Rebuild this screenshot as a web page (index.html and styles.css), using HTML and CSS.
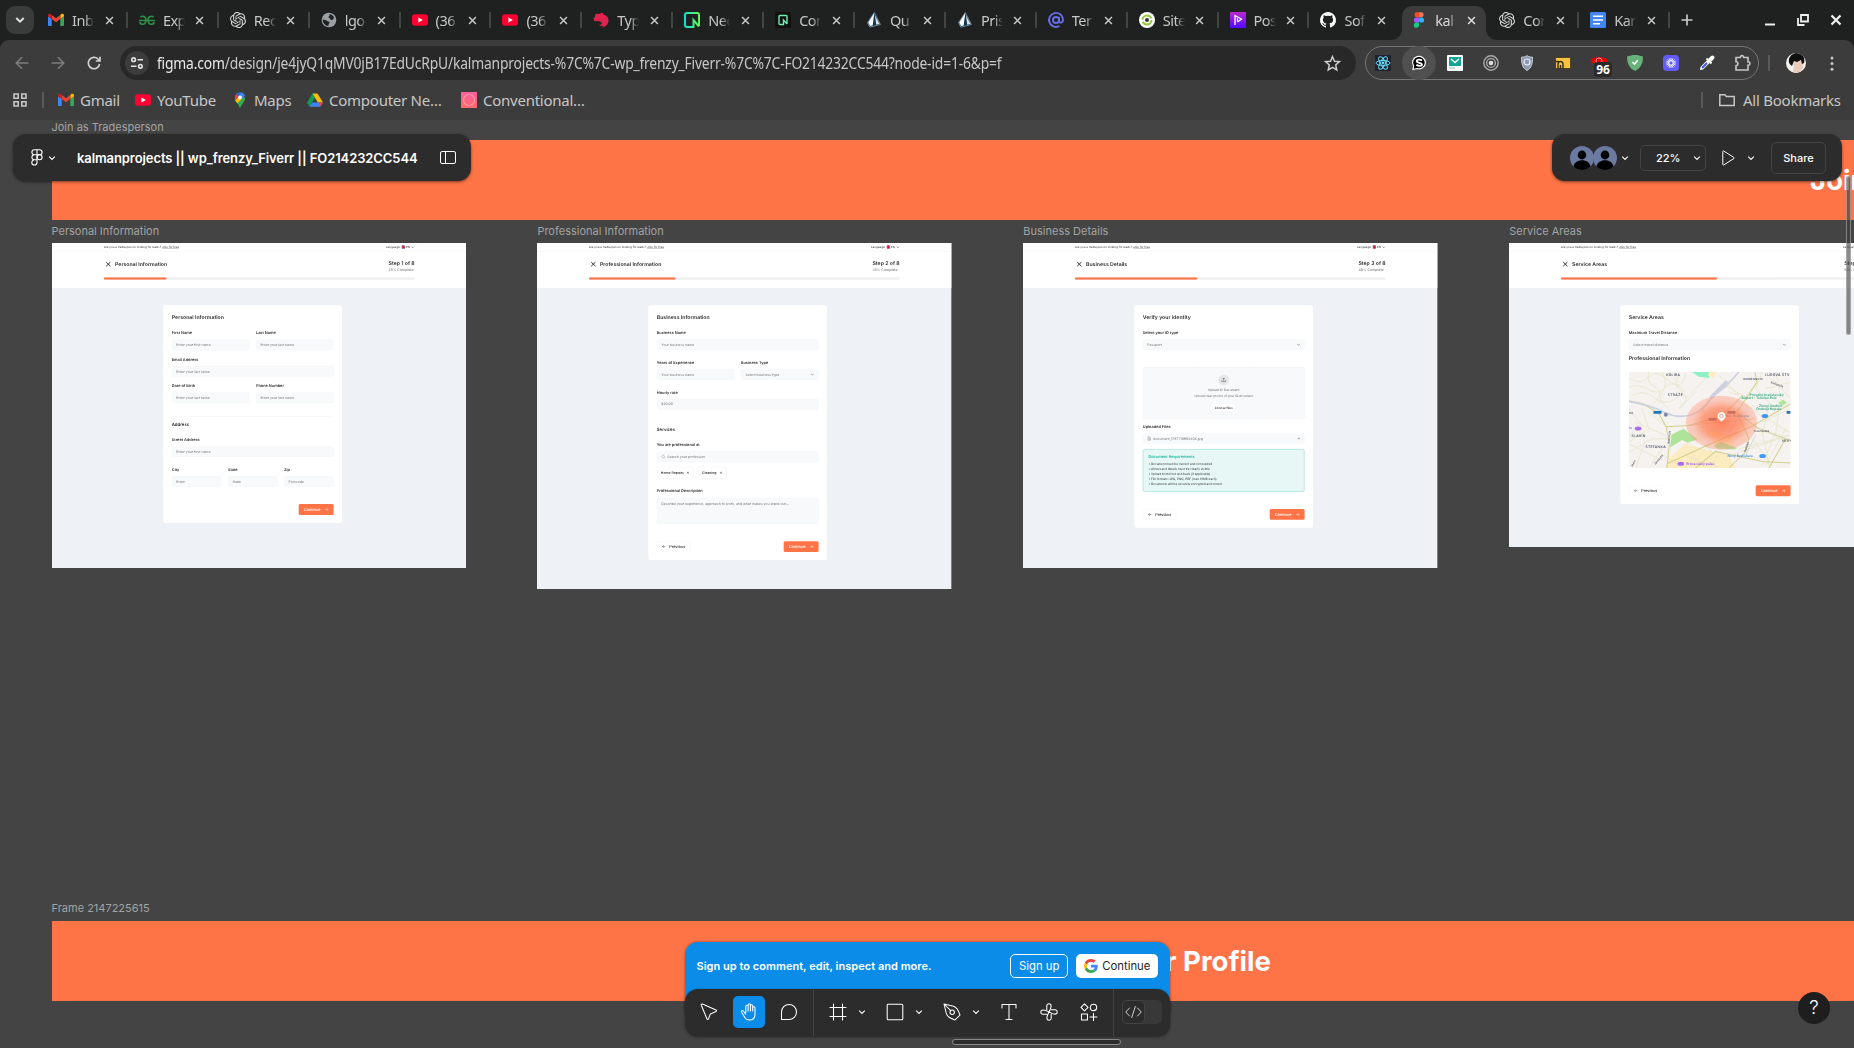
FILE: index.html
```html
<!DOCTYPE html>
<html lang="en">
<head>
<meta charset="utf-8">
<title>kalmanprojects || wp_frenzy_Fiverr || FO214232CC544</title>
<link rel="stylesheet" href="styles.css">
</head>
<body>
<svg class="defs" width="0" height="0">
  <defs>
    <symbol id="gmail" viewBox="0 0 16 16"><path fill="#4285f4" d="M1 14h2.700V7L0 4.200V13a1 1 0 0 0 1 1z"/><path fill="#34a853" d="M12.300 14H15a1 1 0 0 0 1-1V4.200L12.300 7z"/><path fill="#fbbc04" d="M12.300 3v4L16 4.200V3.400c0-1.500-1.600-2.200-2.700-1.300z"/><path fill="#ea4335" d="M3.700 7V3L8 6.200 12.300 3v4L8 10.200z"/><path fill="#c5221f" d="M0 3.400v.8L3.700 7V3l-1-.9C1.600 1.200 0 1.900 0 3.400z"/></symbol>
    <symbol id="yt" viewBox="0 0 16 16"><rect y="2.300" width="16" height="11.400" rx="3" fill="#ff0033"/><path fill="#fff" d="M6.400 5.400v5.200L10.800 8z"/></symbol>
    <symbol id="gpt" viewBox="0 0 24 24"><path fill="#d8d8d8" d="M22.2819 9.8211a5.9847 5.9847 0 0 0-.5157-4.9108 6.0462 6.0462 0 0 0-6.5098-2.9A6.0651 6.0651 0 0 0 4.9807 4.1818a5.9847 5.9847 0 0 0-3.9977 2.9 6.0462 6.0462 0 0 0 .7427 7.0966 5.98 5.98 0 0 0 .511 4.9107 6.051 6.051 0 0 0 6.5146 2.9001A5.9847 5.9847 0 0 0 13.2599 24a6.0557 6.0557 0 0 0 5.7718-4.2058 5.9894 5.9894 0 0 0 3.9977-2.9001 6.0557 6.0557 0 0 0-.7475-7.0729zm-9.022 12.6081a4.4755 4.4755 0 0 1-2.8764-1.0408l.1419-.0804 4.7783-2.7582a.7948.7948 0 0 0 .3927-.6813v-6.7369l2.02 1.1686a.071.071 0 0 1 .038.052v5.5826a4.504 4.504 0 0 1-4.4945 4.4944zm-9.6607-4.1254a4.4708 4.4708 0 0 1-.5346-3.0137l.142.0852 4.783 2.7582a.7712.7712 0 0 0 .7806 0l5.8428-3.3685v2.3324a.0804.0804 0 0 1-.0332.0615L9.74 19.9502a4.4992 4.4992 0 0 1-6.1408-1.6464zM2.3408 7.8956a4.485 4.485 0 0 1 2.3655-1.9728V11.6a.7664.7664 0 0 0 .3879.6765l5.8144 3.3543-2.0201 1.1685a.0757.0757 0 0 1-.071 0l-4.8303-2.7865A4.504 4.504 0 0 1 2.3408 7.872zm16.5963 3.8558L13.1038 8.364 15.1192 7.2a.0757.0757 0 0 1 .071 0l4.8303 2.7913a4.4944 4.4944 0 0 1-.6765 8.1042v-5.6772a.79.79 0 0 0-.407-.667zm2.0107-3.0231l-.142-.0852-4.7735-2.7818a.7759.7759 0 0 0-.7854 0L9.409 9.2297V6.8974a.0662.0662 0 0 1 .0284-.0615l4.8303-2.7866a4.4992 4.4992 0 0 1 6.6802 4.66zM8.3065 12.863l-2.02-1.1638a.0804.0804 0 0 1-.038-.0567V6.0742a4.4992 4.4992 0 0 1 7.3757-3.4537l-.142.0805L8.704 5.459a.7948.7948 0 0 0-.3927.6813zm1.0976-2.3654l2.602-1.4998 2.6069 1.4998v2.9994l-2.5974 1.4997-2.6067-1.4997Z"/></symbol>
    <symbol id="prisma" viewBox="0 0 16 16"><path fill="#0c344b" stroke="#7f9cb3" stroke-width=".8" d="M8.300.6 1.500 10.600l2.300 4.600L14.500 12.500z"/><path fill="#fff" d="M8.300 1 2.200 10.500l1.900 3.600 2.600-.6z"/><path fill="#fff" d="m8.900 3.200 4.600 8.700-3.300.9z" opacity=".85"/></symbol>
    <symbol id="x" viewBox="0 0 10 10"><path fill="none" stroke="currentColor" stroke-width="1.700" d="m1.200 1.200 7.600 7.600m0-7.600L1.200 8.800"/></symbol>
    <symbol id="chev" viewBox="0 0 8 8"><path fill="none" stroke="currentColor" stroke-width="1.100" d="m1.200 2.700 2.800 2.800 2.800-2.800"/></symbol>
    <symbol id="arrow" viewBox="0 0 16 16"><path fill="none" stroke="currentColor" stroke-width="1.800" d="M1 8h13M8.500 2.500 14 8l-5.500 5.500"/></symbol>
    <symbol id="person" viewBox="0 0 24 24"><circle cx="12" cy="12" r="12" fill="#6b7aa1"/><ellipse cx="12" cy="9" rx="4.300" ry="4.400"/><path d="M3.500 20.400C4.300 16.400 7.800 14.300 12 14.300s7.700 2.100 8.500 6.100A12 12 0 0 1 12 24a12 12 0 0 1-8.500-3.600z"/></symbol>
    <symbol id="flag" viewBox="0 0 16 16"><rect width="16" height="16" rx="4" fill="#2a3b84"/><path stroke="#fff" stroke-width="5" d="M8 0v16M0 8h16"/><path stroke="#d8143a" stroke-width="6" d="M8 0v16M0 8h16"/></symbol>
  </defs>
</svg>

<header class="browser">
  <div class="tabstrip">
    <button class="tab-search"><svg width="10" height="10" viewBox="0 0 10 10"><path fill="none" stroke="#e3e3e3" stroke-width="1.900" d="m1.300 3 3.700 3.700L8.700 3"/></svg></button>
    <div class="tabs">
      <div class="tab"><svg class="fav"><use href="#gmail"/></svg><span>Inb</span><svg class="close"><use href="#x"/></svg></div>
      <div class="tab"><svg class="fav" viewBox="0 0 16 16"><path fill="none" stroke="#2f8d46" stroke-width="1.600" d="M1.500 5.300C2.800 3.500 7 4 7 8v1M0 8.500h16M6.800 8.500c0 5-5.300 4.600-6 1.500M14.500 5.300C13.200 3.500 9 4 9 8v1M9.200 8.500c0 5 5.300 4.600 6 1.500"/></svg><span>Exp</span><svg class="close"><use href="#x"/></svg></div>
      <div class="tab"><svg class="fav"><use href="#gpt"/></svg><span>Rec</span><svg class="close"><use href="#x"/></svg></div>
      <div class="tab"><svg class="fav" viewBox="0 0 16 16"><circle cx="8" cy="8" r="7.300" fill="#9aa0a6"/><path fill="#202124" d="M8.500 2.300c1.500-.4 4.500 1.400 4.700 3.900-1.200.2-1 1.800-2.500 1.800C8.500 8 10 6 8 5.700c-1-.2-.8-1.500.5-1.500zM1.800 7.500c2 .2 3.200.5 4 1.200.8 1 2.700.3 2.700 1.700 0 1-1 1-1 2.500v1C4.500 14 1.500 11 1.800 7.500z"/></svg><span>lgo</span><svg class="close"><use href="#x"/></svg></div>
      <div class="tab"><svg class="fav"><use href="#yt"/></svg><span>(36</span><svg class="close"><use href="#x"/></svg></div>
      <div class="tab"><svg class="fav"><use href="#yt"/></svg><span>(36</span><svg class="close"><use href="#x"/></svg></div>
      <div class="tab"><svg class="fav" viewBox="0 0 16 16"><path fill="#e0234e" d="M9.300.8c.8.400.9 1.200.6 2 2.600-.2 5.600 2 5.600 5.500 0 4-3 6.900-6.400 7.100 1-.7 1.400-1.300 1.300-2-1.300 1.200-3.500.8-4.300-.6 1.500.2 2.800-.6 2.600-1.800-.3-1.700-3-1.300-4.500-2.200L3 9.500 1.300 9C1.200 8.500.3 7 .6 5.300L2 6c-.4-1.500 0-3 1-4 1.200-.6 2.200-.4 3 .1 1.200-.8 2.300-.8 3.300-1.300z"/></svg><span>Typ</span><svg class="close"><use href="#x"/></svg></div>
      <div class="tab"><svg class="fav" viewBox="0 0 16 16"><defs><linearGradient id="neon" x1="0" x2="1"><stop stop-color="#12ded0"/><stop offset="1" stop-color="#63f655"/></linearGradient></defs><path fill="none" stroke="url(#neon)" stroke-width="2" d="M15 14V3a2 2 0 0 0-2-2H3a2 2 0 0 0-2 2v10a2 2 0 0 0 2 2h6.500V8L15 14.500"/></svg><span>Neo</span><svg class="close"><use href="#x"/></svg></div>
      <div class="tab"><svg class="fav" viewBox="0 0 16 16"><rect width="16" height="16" rx="1" fill="#111"/><path fill="none" stroke="#6ff0b0" stroke-width="1.400" d="M12 12V4.500a1 1 0 0 0-1-1H5a1 1 0 0 0-1 1v7a1 1 0 0 0 1 1h3.500V8L12 12"/></svg><span>Con</span><svg class="close"><use href="#x"/></svg></div>
      <div class="tab"><svg class="fav"><use href="#prisma"/></svg><span>Qu</span><svg class="close"><use href="#x"/></svg></div>
      <div class="tab"><svg class="fav"><use href="#prisma"/></svg><span>Pris</span><svg class="close"><use href="#x"/></svg></div>
      <div class="tab"><svg class="fav" viewBox="0 0 16 16"><g fill="none" stroke="#656ee8" stroke-width="1.900"><circle cx="8" cy="8" r="3"/><path d="M11 5v4c0 2.400 4 2.400 4-1.500A7 7 0 1 0 11.500 14"/></g></svg><span>Ter</span><svg class="close"><use href="#x"/></svg></div>
      <div class="tab"><svg class="fav" viewBox="0 0 16 16"><circle cx="8" cy="8" r="8" fill="#fff"/><circle cx="8" cy="8" r="4.500" fill="none" stroke="#96c93d" stroke-width="2.200" stroke-dasharray="12 2"/><circle cx="8" cy="8" r="2" fill="#333"/></svg><span>Site</span><svg class="close"><use href="#x"/></svg></div>
      <div class="tab"><svg class="fav" viewBox="0 0 16 16"><defs><linearGradient id="pos" x2="0" y2="1"><stop stop-color="#c026d3"/><stop offset="1" stop-color="#4f0bff"/></linearGradient></defs><rect width="16" height="16" rx="1" fill="url(#pos)"/><path fill="none" stroke="#fff" stroke-width="1.300" d="M5 13V3.500L11.500 7 7.500 10M7.500 6v4"/></svg><span>Pos</span><svg class="close"><use href="#x"/></svg></div>
      <div class="tab before-active"><svg class="fav" viewBox="0 0 16 16"><path fill="#fff" d="M8 0a8 8 0 0 0-2.500 15.600c.4.100.5-.2.500-.4v-1.500c-2.200.5-2.700-.9-2.700-.9-.4-.9-.9-1.200-.9-1.200-.7-.5.100-.5.100-.5.800.1 1.200.8 1.200.8.700 1.200 1.900.9 2.300.7.100-.5.300-.9.500-1.100-1.800-.2-3.600-.9-3.600-4 0-.9.300-1.600.8-2.100-.1-.2-.4-1 .1-2.100 0 0 .7-.2 2.200.8a7.500 7.500 0 0 1 4 0c1.500-1 2.200-.8 2.200-.8.400 1.100.2 1.900.1 2.100.5.500.8 1.200.8 2.100 0 3.100-1.900 3.700-3.700 3.900.3.300.6.800.6 1.500v2.300c0 .2.100.5.500.4A8 8 0 0 0 8 0z"/></svg><span>Sof</span><svg class="close"><use href="#x"/></svg></div>
      <div class="tab active"><svg class="fav" viewBox="0 0 16 16"><path fill="#f24e1e" d="M8 .3H5.500a2.600 2.600 0 0 0 0 5.100H8z"/><path fill="#ff7262" d="M8 .3h2.500a2.600 2.600 0 0 1 0 5.100H8z"/><path fill="#a259ff" d="M8 5.400H5.500a2.600 2.600 0 0 0 0 5.200H8z"/><circle cx="10.500" cy="8" r="2.600" fill="#1abcfe"/><path fill="#0acf83" d="M5.500 10.600H8v2.500a2.600 2.600 0 1 1-2.500-2.500z"/></svg><span>kal</span><svg class="close"><use href="#x"/></svg></div>
      <div class="tab"><svg class="fav"><use href="#gpt"/></svg><span>Cor</span><svg class="close"><use href="#x"/></svg></div>
      <div class="tab"><svg class="fav" viewBox="0 0 16 16"><rect width="16" height="16" rx="1.500" fill="#4285f4"/><path stroke="#fff" stroke-width="1.600" d="M3 4.200h10M3 8h10M3 11.800h7"/></svg><span>Kar</span><svg class="close"><use href="#x"/></svg></div>
    </div>
    <svg class="newtab" width="12" height="12" viewBox="0 0 12 12"><path stroke="#c7c7c7" stroke-width="1.700" d="M6 .5v11M.5 6h11"/></svg>
    <div class="win-buttons">
      <svg width="12" height="12" viewBox="0 0 12 12"><path stroke="#eee" stroke-width="2" d="M1 10.500h10"/></svg>
      <svg width="12" height="12" viewBox="0 0 12 12"><path fill="none" stroke="#eee" stroke-width="1.800" d="M4 1h7v6.500H4zM1 4v7h6.500"/></svg>
      <svg width="12" height="12" viewBox="0 0 12 12"><path stroke="#eee" stroke-width="2.300" d="m1.500 1.500 9 9m0-9-9 9"/></svg>
    </div>
  </div>

  <div class="toolbar">
    <div class="nav">
      <svg viewBox="0 0 14 14"><path fill="none" stroke="#7d7d7d" stroke-width="1.600" d="M13.500 7H1.500M7 1.300 1.300 7 7 12.700"/></svg>
      <svg viewBox="0 0 14 14"><path fill="none" stroke="#7d7d7d" stroke-width="1.600" d="M.5 7h12M7 1.300 12.700 7 7 12.700"/></svg>
      <svg viewBox="0 0 14 14"><path fill="none" stroke="#d0d0d0" stroke-width="1.700" d="M12.600 8A5.700 5.700 0 1 1 11 3l1.500 1.500M13 .8V5H8.800"/></svg>
    </div>
    <div class="omnibox">
      <span class="site"><svg width="14" height="14" viewBox="0 0 14 14"><g fill="none" stroke="#e3e3e3" stroke-width="1.600"><circle cx="3.600" cy="3.700" r="1.800"/><path d="M7.500 3.700H13M1 10.300h5.500"/><circle cx="10.400" cy="10.300" r="1.800"/></g></svg></span>
      <span class="url"><b>figma.com</b>/design/je4jyQ1qMV0jB17EdUcRpU/kalmanprojects-%7C%7C-wp_frenzy_Fiverr-%7C%7C-FO214232CC544?node-id=1-6&amp;p=f</span>
      <svg class="star" viewBox="0 0 16 16"><path fill="none" stroke="#d0d0d0" stroke-width="1.400" d="m8 1.600 1.900 4.300 4.600.4L11 9.400l1 4.600-4-2.400L4 14l1-4.600-3.500-3.100 4.600-.4z"/></svg>
    </div>
    <div class="extensions">
      <span><svg viewBox="0 0 16 16"><rect width="16" height="16" fill="#20232a"/><g fill="none" stroke="#61dafb"><ellipse cx="8" cy="8" rx="7" ry="2.600"/><ellipse cx="8" cy="8" rx="7" ry="2.600" transform="rotate(60 8 8)"/><ellipse cx="8" cy="8" rx="7" ry="2.600" transform="rotate(120 8 8)"/></g><circle cx="8" cy="8" r="1.400" fill="#61dafb"/></svg></span>
      <span class="hover"><svg viewBox="0 0 16 16"><path fill="#000" stroke="#fff" stroke-width="1.200" d="M2 14.500 2.600 11A6.400 6.200 0 1 1 6 13.500z"/><path fill="none" stroke="#fff" stroke-width="1.800" d="M11 5.600C9.500 4.300 5.700 4.300 5.700 6.200S11 7.600 11 9.400s-4 1.800-5.600.4"/></svg></span>
      <span><svg viewBox="0 0 16 16"><rect width="16" height="16" rx="1" fill="#fff"/><path fill="#12a594" d="M2 2h12v9H2z"/><path fill="none" stroke="#fff" stroke-width="1.400" d="m4 4 4 3.500L12 4"/><path stroke="#9bb" d="M2 13h6"/></svg></span>
      <span><svg viewBox="0 0 16 16"><g fill="none" stroke="#aaa" stroke-width="1.400"><circle cx="8" cy="8" r="7.200"/><circle cx="8" cy="8" r="4.400"/></g><circle cx="8" cy="8" r="2.300" fill="#ddd"/></svg></span>
      <span><svg viewBox="0 0 16 16"><path fill="#8d99ae" stroke="#c9d1dd" d="M8 .7c2 1.300 4 1.500 5.500 1.500C13.500 9 12.500 13 8 15.400 3.500 13 2.500 9 2.500 2.200 4 2.200 6 2 8 .7z"/><circle cx="8" cy="7" r="3" fill="none" stroke="#eef" stroke-width="1.200"/></svg></span>
      <span><svg viewBox="0 0 16 16"><path fill="#f6c343" stroke="#3b3217" stroke-width=".8" d="M.5 2.500h15v11H.5z"/><path fill="none" stroke="#3b3217" stroke-width="1.500" d="M1 6.500h2.500M3 13.500v-4c0-2 1.200-3 2.500-3S8 7.500 8 9.500v4M5.500 10v3.500"/></svg></span>
      <span class="badged"><svg viewBox="0 0 16 16"><path fill="#e60000" d="M0 4.500C2 1 14 1 16 4.500V8H0z"/><circle cx="8" cy="6" r="3" fill="none" stroke="#ff9a9a"/></svg><i>96</i></span>
      <span><svg viewBox="0 0 16 16"><path fill="#67b279" d="M8 0c2.600 0 5.400.6 8 1.500C16 8 14 13 8 16 2 13 0 8 0 1.500 2.600.6 5.400 0 8 0z"/><path fill="none" stroke="#fff" stroke-width="1.500" d="m5.300 7 2.200 2.200 3.200-4"/></svg></span>
      <span><svg viewBox="0 0 16 16"><rect width="16" height="16" rx="4" fill="#635bff"/><g stroke="#fff" stroke-width=".9"><path d="M8 3v10M3 8h10M4.500 4.500l7 7M11.500 4.500l-7 7M6.100 3.400l3.800 9.200M9.900 3.400l-3.800 9.200M3.400 6.100l9.200 3.800M3.400 9.900l9.200-3.800"/></g><circle cx="8" cy="8" r="2.200" fill="#635bff" stroke="#fff"/></svg></span>
      <span><svg viewBox="0 0 16 16"><path fill="#fff" d="m1 15 .5-3L8 5.300 10.700 8 4 14.500z"/><path stroke="#3b5bdb" stroke-width="2" d="m3 13 5-5"/><path stroke="#fff" stroke-width="1.800" d="m7.500 3.500 5 5"/><path stroke="#fff" stroke-width="4" stroke-linecap="round" d="m10.500 5.500 3-3"/></svg></span>
      <span><svg viewBox="0 0 16 16"><path fill="none" stroke="#c7c7c7" stroke-width="1.600" d="M1 2.500h4.300c-.2-2.500 3.600-2.500 3.400 0H13v4.300c2.500-.2 2.500 3.600 0 3.400V15H1v-4.300c2.500 0 2.500-3.900 0-3.900z"/></svg></span>
    </div>
    <i class="vline"></i>
    <svg class="avatar" viewBox="0 0 20 20"><clipPath id="av"><circle cx="10" cy="10" r="10"/></clipPath><g clip-path="url(#av)"><path fill="#f3f0ee" d="M0 0h20v20H0z"/><path fill="#e8cbbb" d="M8 8h9v7l-4 5H7z"/><path fill="#101010" d="M3 9C2 3 8-1 13 0c5 1 6 6 5 10l-2 1-1-4-4 2-3-1-2 5C5 12 3 11 3 9z"/></g></svg>
    <svg class="kebab" viewBox="0 0 4 16"><g fill="#c7c7c7"><circle cx="2" cy="2" r="1.600"/><circle cx="2" cy="8" r="1.600"/><circle cx="2" cy="14" r="1.600"/></g></svg>
  </div>

  <div class="bookmarks">
    <svg class="apps" viewBox="0 0 14 14"><path fill="none" stroke="#c7c7c7" stroke-width="1.600" d="M1 1h4.200v4.200H1zM8.800 1H13v4.200H8.800zM1 8.800h4.200V13H1zM8.800 8.800H13V13H8.800z"/></svg>
    <i class="vline"></i>
    <a class="b-gmail"><svg viewBox="0 0 16 16"><use href="#gmail"/></svg><span>Gmail</span></a>
    <a class="b-yt"><svg viewBox="0 0 16 16"><use href="#yt"/></svg><span>YouTube</span></a>
    <a class="b-maps"><svg viewBox="0 0 16 16"><path fill="#34a853" d="M3.500 9C5.500 11.500 7 13 7.400 15.300c.2.900 1 .9 1.200 0C9 13 13.500 9.500 13.200 5.300L8 6z"/><path fill="#fbbc04" d="M3 8.200 6.500 4l3.300 3.100L5.300 11.300z"/><path fill="#4285f4" d="M8 .2c2 0 4 1.200 4.800 3.200L9.800 7.100 6.500 4l2.800-3.600z"/><path fill="#4285f4" d="M6.300 4.200 9.300.4 12.800 3.400 9.800 7z"/><path fill="#ea4335" d="M4.200 2 7 4.300 3.300 8.600C2.400 6.800 2.500 4 4.200 2z"/><path fill="#1a73e8" d="M4.200 2C5.300.7 7.400-.1 9.400.4L6.500 4z"/><circle cx="8" cy="5.400" r="1.900" fill="#fff"/></svg><span>Maps</span></a>
    <a class="b-drive"><svg viewBox="0 0 16 16"><path fill="#0f9d58" d="M5.500 1.500 0 10.800l2.700 4L8 5.500z"/><path fill="#fbbc04" d="M5.500 1.500h5L16 10.500h-5.200z"/><path fill="#4285f4" d="M5.300 10.500H16l-2.700 4.300H2.700z"/><path fill="#ea4335" d="m12 10.500 4 0-2.300 3.700z"/></svg><span>Compouter Ne…</span></a>
    <a class="b-conv"><svg viewBox="0 0 16 16"><defs><linearGradient id="cc" x2="0" y2="1"><stop stop-color="#fb5fa0"/><stop offset="1" stop-color="#fd6a6a"/></linearGradient></defs><path fill="url(#cc)" d="M0 0h16v16H0z"/><circle cx="8" cy="8" r="5.500" fill="none" stroke="#ff9aa8" stroke-width="1.200"/></svg><span>Conventional…</span></a>
    <i class="vline last"></i>
    <a class="b-all"><svg viewBox="0 0 16 16"><path fill="none" stroke="#c7c7c7" stroke-width="1.500" d="M.8 2.700h5l1.600 1.700h7.800v9H.8z"/></svg><span>All Bookmarks</span></a>
  </div>
</header>

<main class="canvas">
  <div class="label l-join">Join as Tradesperson</div>
  <div class="banner banner-1"><span>Join as Tradesperson</span></div>
  <div class="label l-frame">Frame 2147225615</div>
  <div class="banner banner-2"><span>Your Profile</span></div>

  <section class="board board-1">
    <div class="label">Personal Information</div>
    <div class="clip"><div class="page">
      <div class="topbar"><span>Are you a tradesperson looking for leads? <u>Join for free</u></span><span class="lang">Language: <svg width="16" height="16"><use href="#flag"/></svg>EN <svg width="16" height="16"><use href="#chev"/></svg></span></div>
      <div class="head"><div class="head-row"><svg class="hx"><use href="#x"/></svg><h2>Personal Information</h2><div class="step"><b>Step 1 of 8</b><small>25% Complete</small></div></div><div class="bar"><i style="width:290px"></i></div></div>
      <div class="card">
        <h3>Personal Information</h3>
        <div class="row first"><div class="field"><label>First Name</label><p>Enter your first name</p></div><div class="field"><label>Last Name</label><p>Enter your last name</p></div></div>
        <div class="row tight"><div class="field"><label>Email Address</label><p>Enter your last name</p></div></div>
        <div class="row tight"><div class="field"><label>Date of Birth</label><p>Enter your last name</p></div><div class="field"><label>Phone Number</label><p>Enter your last name</p></div></div>
        <hr>
        <h4 class="after-rule">Address</h4>
        <div class="row"><div class="field"><label>Street Address</label><p>Enter your first name</p></div></div>
        <div class="row"><div class="field"><label>City</label><p>Enter</p></div><div class="field"><label>State</label><p>State</p></div><div class="field"><label>Zip</label><p>Postcode</p></div></div>
        <div class="actions"><span></span><span class="btn primary">Continue <svg><use href="#arrow"/></svg></span></div>
      </div>
    </div></div>
  </section>

  <section class="board board-2">
    <div class="label">Professional Information</div>
    <div class="clip"><div class="page">
      <div class="topbar"><span>Are you a tradesperson looking for leads? <u>Join for free</u></span><span class="lang">Language: <svg width="16" height="16"><use href="#flag"/></svg>EN <svg width="16" height="16"><use href="#chev"/></svg></span></div>
      <div class="head"><div class="head-row"><svg class="hx"><use href="#x"/></svg><h2>Professional Information</h2><div class="step"><b>Step 2 of 8</b><small>35% Complete</small></div></div><div class="bar"><i style="width:402px"></i></div></div>
      <div class="card">
        <h3>Business Information</h3>
        <div class="row"><div class="field"><label>Business Name</label><p>Your business name</p></div></div>
        <div class="row"><div class="field"><label>Years of Experience</label><p>Your business name</p></div><div class="field"><label>Business Type</label><p>Select business type <svg class="end"><use href="#chev"/></svg></p></div></div>
        <div class="row"><div class="field"><label>Hourly rate</label><p>$20.00</p></div></div>
        <h4 class="spaced">Services</h4>
        <div class="row"><div class="field"><label>You are professional at</label><p class="search"><svg class="lead" viewBox="0 0 16 16"><path fill="none" stroke="#777" stroke-width="1.500" d="M11 11a5.500 5.500 0 1 1 1-1l3 4"/></svg>Search your profession</p></div></div>
        <div class="chips"><span class="w1">Home Repairs <svg><use href="#x"/></svg></span><span class="w2">Cleaning <svg><use href="#x"/></svg></span></div>
        <div class="row"><div class="field"><label>Professional Description</label><p class="area">Describe your experience, approach to work, and what makes you stand out...</p></div></div>
        <div class="actions"><span class="btn"><svg class="flip"><use href="#arrow"/></svg> Previous</span><span class="btn primary">Continue <svg><use href="#arrow"/></svg></span></div>
      </div>
    </div></div>
  </section>

  <section class="board board-3">
    <div class="label">Business Details</div>
    <div class="clip"><div class="page">
      <div class="topbar"><span>Are you a tradesperson looking for leads? <u>Join for free</u></span><span class="lang">Language: <svg width="16" height="16"><use href="#flag"/></svg>EN <svg width="16" height="16"><use href="#chev"/></svg></span></div>
      <div class="head"><div class="head-row"><svg class="hx"><use href="#x"/></svg><h2>Business Details</h2><div class="step"><b>Step 3 of 8</b><small>40% Complete</small></div></div><div class="bar"><i style="width:568px"></i></div></div>
      <div class="card">
        <h3>Verify your identity</h3>
        <div class="row"><div class="field"><label>Select your ID type</label><p>Passport <svg class="end"><use href="#chev"/></svg></p></div></div>
        <div class="drop"><span class="disc"><svg width="24" height="24" viewBox="0 0 24 24"><path fill="none" stroke="#333" stroke-width="2" d="M3 14v6h18v-6M12 16V4M7 8.500l5-5 5 5"/></svg></span><span class="d1">Upload ID Document</span><span class="d2">Upload clear photos of your ID document</span><span class="choose">Choose files</span></div>
        <div class="row files"><div class="field"><label>Uploaded Files</label><p><svg class="lead" viewBox="0 0 16 16"><path fill="none" stroke="#666" stroke-width="1.500" d="M3 1h7l3 3v11H3zM5.500 7h5M5.500 10h5"/></svg>document_1757719693304.jpg <svg class="end x"><use href="#x"/></svg></p></div></div>
        <div class="reqs"><b>Document Requirements</b><ul><li>Document must be current and not expired</li><li>All text and details must be clearly visible</li><li>Upload both front and back (if applicable)</li><li>File formats: JPG, PNG, PDF (max 10MB each)</li><li>Documents will be securely encrypted and stored</li></ul></div>
        <div class="actions"><span class="btn"><svg class="flip"><use href="#arrow"/></svg> Previous</span><span class="btn primary">Continue <svg><use href="#arrow"/></svg></span></div>
      </div>
    </div></div>
  </section>

  <section class="board board-4">
    <div class="label">Service Areas</div>
    <div class="clip"><div class="page">
      <div class="topbar"><span>Are you a tradesperson looking for leads? <u>Join for free</u></span><span class="lang">Language: <svg width="16" height="16"><use href="#flag"/></svg>EN <svg width="16" height="16"><use href="#chev"/></svg></span></div>
      <div class="head"><div class="head-row"><svg class="hx"><use href="#x"/></svg><h2>Service Areas</h2><div class="step"><b>Step 4 of 8</b><small>50% Complete</small></div></div><div class="bar"><i style="width:724px"></i></div></div>
      <div class="card">
        <h3>Service Areas</h3>
        <div class="row"><div class="field"><label>Maximum Travel Distance</label><p>Select travel distance <svg class="end"><use href="#chev"/></svg></p></div></div>
        <h3 class="second">Professional Information</h3>
        <svg class="map" viewBox="0 0 485 288" preserveAspectRatio="none">
          <defs><radialGradient id="heat"><stop stop-color="#ff6a3c" stop-opacity=".8"/><stop offset=".55" stop-color="#ff7a50" stop-opacity=".68"/><stop offset=".82" stop-color="#ff8d6c" stop-opacity=".42"/><stop offset="1" stop-color="#ff9577" stop-opacity=".38"/></radialGradient></defs>
          <path fill="#f5f2ef" d="M0 0h485v288H0z"/>
          <path fill="#8ff0c4" d="M190 0h58l-8 18-30-4z"/><path fill="#fdecc0" d="M240 0h22l-6 16-18-4zM120 260l50-45 70 20 60 15 20 38H110zM240 170l60 20 20 30-60 5z"/>
          <path fill="#aee39a" d="M128 188l36-18 42 32-30 10-16-8-36 22zM255 222l20-14 50 20-8 4-50-2zM448 92l14-10 12 10-16 10z"/>
          <g fill="none" stroke="#e2e2c0" stroke-width="1.800">
            <path d="M0 20q40 20 60-5t60 10 50-20M0 45q30-10 60 8t50-8 60 15M10 70q40-20 70 10t80-15M60 0q-10 30 20 45t-10 55M100 0q20 40 0 60t20 50M150 10q-20 30 10 50t-10 50M0 110l40 50-40 30M40 110l20 60-60 40M20 150l90 40M60 120l60 50M0 240l70-40 60 0M20 288l30-80M60 288l40-60M0 215l100 50M90 240l60 40"/>
            <path d="M200 60l-50 50M230 20l-60 60M270 10l60 60M290 40l50 30M300 60l80 20M400 0l-20 50 60 60M430 20l55 60M410 50l75-20M440 0l20 100M330 90l60 30M380 120l100 60M400 150l85-40M420 100l-20 90M450 110l-10 80M340 150l140 60M370 200l60 80M400 180l20 100M440 180l-40 100M470 170l-60 110M330 230l150-40M300 250l180-60M200 240l-30 48M240 220l-60 68M280 230l-40 58M210 200l60 60M170 250l100 38M300 150l-40 60M220 100l20 90"/>
          </g>
          <g fill="none" stroke="#d2d08d" stroke-width="3"><path d="M0 86l40 8 50 30 22 40 70-4 100-30 60-60M112 164l10 50-8 74M378 0l6 30-60 90 36 80-10 40-50 48M323 120l60 46 102 40M485 95l-120 70-120 50-130 60M200 288l60-50 140 30 85 5M470 200l-50 88"/></g>
          <g fill="none" stroke="#cdd0de"><path stroke-width="5" d="M0 88q60 10 110 34t100-4q20-14 40-44l40-30 40-44"/><path stroke-width="11" d="M245 78l50-50"/></g>
          <g fill="none" stroke="#a5a7a9"><path d="M180 160l200-20M300 180l40-60M380 190l-30 60"/></g>
          <g fill="#4e5f86"><path d="M296 117h24v8h-24zM239 138h24v8h-24z"/></g>
          <g class="blue"><text x="290" y="136">Hot. Bratislava</text><text x="296" y="255">Nový Bratislava</text></g>
          <ellipse cx="278" cy="152" rx="107" ry="81" fill="url(#heat)"/>
          <g class="places"><text x="112" y="12">KOLIBA</text><text x="117" y="73">STRÁŽE</text><text x="408" y="11">ĽUDOVÁ ŠTV</text><text x="343" y="25" class="sm">HORNÉ MESTO</text><text x="8" y="196">SLAVÍN</text><text x="50" y="229">ŠTEFANKA</text><text x="460" y="209">NIVY</text><text x="0" y="125" class="sm">TIA</text><text transform="translate(12 284) rotate(-65)" class="sm">Staro</text><text transform="translate(80 278) rotate(-50)" class="sm">Zámocká</text><text transform="translate(122 214) rotate(-85)" class="sm">Rázusova</text><text transform="translate(350 240) rotate(-70)" class="sm">Košická</text><text x="374" y="180" class="sm">Trenčianska</text><text transform="translate(425 33) rotate(20)" class="sm">Račianska</text></g>
          <g class="green"><text x="362" y="72">Prírodný bratislavský</text><text x="338" y="80">Airport - Tehelné Pole</text><text x="390" y="105">Zimný štadión</text><text x="382" y="115">Ondreja Nepelu</text></g>
          <text x="172" y="279" class="violet">Primaciálny palác</text><text x="0" y="172" class="violet">in</text>
          <g fill="#2473b8"><path d="M74 117h24v8H74zM473 117h12v8h-12z"/></g><circle cx="111" cy="128" r="6" fill="#7d89a5"/>
          <g fill="#3d97f5"><ellipse cx="408" cy="132" rx="10" ry="6"/><ellipse cx="401" cy="252" rx="10" ry="6"/></g><g fill="#a96bf0"><ellipse cx="28" cy="169" rx="10" ry="6"/><ellipse cx="156" cy="275" rx="10" ry="6"/></g>
          <path fill="#fff" stroke="#f9a48c" d="M278 120c8 0 12 6 12 13 0 8-8 10-12 16-4-6-12-8-12-16 0-7 4-13 12-13z"/><circle cx="278" cy="132" r="5.500" fill="none" stroke="#f27d5d" stroke-width="2"/>
        </svg>
        <div class="actions"><span class="btn"><svg class="flip"><use href="#arrow"/></svg> Previous</span><span class="btn primary">Continue <svg><use href="#arrow"/></svg></span></div>
      </div>
    </div></div>
  </section>

  <div class="scroll-v"></div>
  <div class="scroll-h"></div>

  <div class="panel file-panel">
    <svg class="flogo" viewBox="0 0 12 17"><g fill="none" stroke="#fff" stroke-width="1.100"><path d="M6 .8H3.400a2.500 2.500 0 0 0 0 5H6zM6 .8h2.600a2.500 2.500 0 0 1 0 5H6zM6 5.800H3.400a2.500 2.500 0 0 0 0 5H6zM3.400 10.800H6v2.600a2.600 2.600 0 1 1-2.600-2.600z"/><circle cx="8.600" cy="8.300" r="2.500"/></g></svg>
    <svg class="chev c1"><use href="#chev"/></svg>
    <strong>kalmanprojects || wp_frenzy_Fiverr || FO214232CC544</strong>
    <svg class="side" viewBox="0 0 16 13"><path fill="none" stroke="#fff" d="M2 .5h12A1.500 1.500 0 0 1 15.500 2v9a1.500 1.500 0 0 1-1.500 1.500H2A1.500 1.500 0 0 1 .5 11V2A1.500 1.500 0 0 1 2 .5zM5.500.5v12"/></svg>
  </div>

  <div class="panel share-panel">
    <svg class="user"><use href="#person"/></svg><svg class="user second-user"><use href="#person"/></svg>
    <svg class="chev"><use href="#chev"/></svg>
    <span class="zoom">22% <svg class="chev"><use href="#chev"/></svg></span>
    <svg class="play" viewBox="0 0 13 16"><path fill="none" stroke="#fff" stroke-linejoin="round" d="M.8 1.500v13a.6.600 0 0 0 1 .4l10-6.300a.7.700 0 0 0 0-1.200l-10-6.300a.6.600 0 0 0-1 .4z"/></svg>
    <svg class="chev"><use href="#chev"/></svg>
    <span class="share">Share</span>
  </div>

  <div class="signup">
    <strong>Sign up to comment, edit, inspect and more.</strong>
    <span class="outline">Sign up</span>
    <span class="google"><svg viewBox="0 0 48 48"><path fill="#ea4335" d="M24 9.500c3.540 0 6.710 1.220 9.210 3.600l6.850-6.850C35.900 2.380 30.470 0 24 0 14.620 0 6.510 5.380 2.560 13.220l7.980 6.190C12.430 13.720 17.740 9.500 24 9.500z"/><path fill="#4285f4" d="M46.980 24.550c0-1.570-.15-3.090-.38-4.550H24v9.020h12.940c-.58 2.960-2.260 5.480-4.780 7.180l7.730 6c4.510-4.180 7.090-10.360 7.090-17.650z"/><path fill="#fbbc05" d="M10.530 28.590A14.500 14.500 0 0 1 10.530 19.410l-7.980-6.190a24 24 0 0 0 0 21.560z"/><path fill="#34a853" d="M24 48c6.480 0 11.930-2.130 15.890-5.810l-7.730-6c-2.150 1.450-4.920 2.300-8.160 2.300-6.260 0-11.570-4.220-13.470-9.910l-7.980 6.190C6.510 42.620 14.620 48 24 48z"/></svg>Continue</span>
  </div>

  <div class="panel tools">
    <span class="tool"><svg viewBox="0 0 18 18"><path d="M1.300 2.200 7 16c.3.700 1.100.6 1.400 0l2-5.100 5.600-2.500c.7-.4.700-1.100 0-1.400L2.500 1.100c-.8-.3-1.500.3-1.200 1.100z"/></svg></span>
    <span class="tool on"><svg viewBox="0 0 18 18"><path d="M5.800 9.500V3.300a1.150 1.150 0 0 1 2.300 0V1.900a1.150 1.150 0 0 1 2.300 0v1a1.150 1.150 0 0 1 2.300 0v2a1.150 1.150 0 0 1 2.300 0V11c0 3.500-2 6-5.300 6-2.700 0-4.400-1.300-5.500-3.500L1.600 9.200c-.7-1.500 1-2.200 1.900-1l2.300 3M8.100 3v5M10.400 2.600V8M12.700 4.500V8"/></svg></span>
    <span class="tool"><svg viewBox="0 0 18 18"><path d="M1.500 16.500V9A7.500 7.500 0 1 1 9 16.500z"/></svg></span>
    <i class="split"></i>
    <span class="tool t-frame"><svg viewBox="0 0 18 18"><path d="M4.500 1v16M13.500 1v16M1 4.500h16M1 13.500h16"/></svg></span><svg class="chev"><use href="#chev"/></svg>
    <span class="tool"><svg viewBox="0 0 18 18"><rect x="1.200" y="1.200" width="15.600" height="15.600" rx="1"/></svg></span><svg class="chev"><use href="#chev"/></svg>
    <span class="tool"><svg viewBox="0 0 18 18"><path d="M1 1l9.500 2.300c3 .8 5 4.200 6.500 8.700l-5 5C7.500 15.500 4 13.500 3.300 10.500zM1 1l6.700 6.700M12 17l5-5"/><circle cx="9.200" cy="9.200" r="2.200"/></svg></span><svg class="chev"><use href="#chev"/></svg>
    <span class="tool t-text"><svg viewBox="0 0 18 18"><path d="M2 5V1.500h14V5M9 1.500v15M6 16.500h6"/></svg></span>
    <span class="tool"><svg viewBox="0 0 18 18"><path id="blade" d="M6.800 6.900V2.800c0-2.700 4.300-2.700 4.300.2 0 2.300-1.100 3.600-2.100 6"/><use href="#blade" transform="rotate(90 9 9)"/><use href="#blade" transform="rotate(180 9 9)"/><use href="#blade" transform="rotate(270 9 9)"/></svg></span>
    <span class="tool"><svg viewBox="0 0 18 18"><path d="M4.500.9 8 4.400 4.500 7.900 1 4.400zM1.500 11h6v6h-6zM13.500 10.500v7M10 14h7"/><circle cx="13.500" cy="4.400" r="3.200"/></svg></span>
    <i class="split s2"></i>
    <span class="dev"><span><svg viewBox="0 0 18 14"><path d="M5 2.500.8 7 5 11.500M13 2.500 17.200 7 13 11.500M11 .8 7 13.200"/></svg></span></span>
  </div>

  <div class="help">?</div>
</main>
</body>
</html>
```

FILE: styles.css
```css
* { box-sizing: border-box; }
body { margin: 0; width: 1854px; height: 1048px; overflow: hidden; display: flex; flex-direction: column; background: #444; font-family: Inter, sans-serif; }
.defs { position: absolute; }
svg { display: block; flex: none; overflow: visible; }

/* browser window */
.browser { flex: none; height: 120px; background: #1f2120; color: #c7c7c7; font: 15px "Noto Sans", "Open Sans", sans-serif; }
.tabstrip { height: 40px; display: flex; align-items: center; padding-left: 6px; }
.tab-search { width: 28px; height: 28px; border: 0; border-radius: 9px; padding: 0; background: #3a3b3b; display: grid; place-items: center; }
.tabs { display: flex; margin-left: 3px; align-self: stretch; align-items: center; }
.tab { width: 90.9px; height: 34px; display: flex; align-items: center; padding-left: 11px; position: relative; }
.tab::after { content: ""; position: absolute; right: 0; top: 9px; width: 2px; height: 16px; background: #434544; }
.fav { width: 16px; height: 16px; }
.tab span { width: 22px; margin-left: 8px; overflow: hidden; white-space: nowrap; font-size: 14.500px; letter-spacing: -.5px; -webkit-mask: linear-gradient(90deg, #000 60%, transparent); mask: linear-gradient(90deg, #000 60%, transparent); }
.close { width: 9px; height: 9px; margin-left: 10.500px; }
.before-active::after, .active::after { display: none; }
.active { width: 84px; margin: 0 2px 0 2px; padding-left: 9px; height: 34px; align-self: flex-end; background: #3c3c3c; border-radius: 10px 10px 0 0; padding-bottom: 6px; color: #dcdcdc; }
.active .close { margin-left: 10px; }
.active::before { content: ""; position: absolute; left: -10px; right: -10px; bottom: 0; height: 10px; background: radial-gradient(circle at 0 0, transparent 9.5px, #3c3c3c 10px) left / 10px 10px no-repeat, radial-gradient(circle at 100% 0, transparent 9.5px, #3c3c3c 10px) right / 10px 10px no-repeat; }
.newtab { margin-left: 11px; }
.win-buttons { margin-left: auto; display: flex; gap: 21px; padding-right: 12px; }

.toolbar { height: 46px; background: #3c3c3c; border-radius: 9px 9px 0 0; display: flex; align-items: center; }
.nav { display: flex; gap: 22px; padding-left: 15px; width: 120px; flex: none; }
.nav svg { width: 14px; height: 14px; }
.omnibox { width: 1236px; flex: none; height: 34px; border-radius: 17px; background: #282828; display: flex; align-items: center; padding-left: 5px; }
.site { width: 24px; height: 24px; border-radius: 50%; background: #3c3c3c; display: grid; place-items: center; }
.url { margin-left: 8px; font-size: 15.500px; letter-spacing: -.2px; white-space: nowrap; transform: scaleX(.894); transform-origin: 0 50%; }
.url b { font-weight: 400; color: #e8e8e8; }
.star { width: 17px; height: 17px; margin: 0 15px 0 auto; }
.extensions { margin-left: 9px; width: 394px; flex: none; height: 34px; border: 1px solid #757575; border-radius: 17px; display: flex; align-items: center; }
.extensions span { width: 36.100px; flex: none; height: 32px; display: grid; place-items: center; position: relative; left: -1.500px; }
.extensions svg { width: 16px; height: 16px; }
.extensions .hover::before { content: ""; position: absolute; left: 1px; top: -1px; width: 34px; height: 34px; border-radius: 50%; background: #505050; }
.extensions .hover svg { position: relative; }
.badged i { position: absolute; left: 13px; top: 15px; width: 18px; height: 15px; border-radius: 4px; background: #2a2a2a; color: #fff; font: 700 12px/15px "Noto Sans", sans-serif; text-align: center; }
.vline { width: 2px; height: 16px; background: #5a5a5a; flex: none; }
.toolbar .vline { margin-left: 9px; }
.avatar { width: 20px; height: 20px; margin-left: 16px; }
.kebab { width: 4px; height: 15px; margin-left: 24px; }

.bookmarks { height: 34px; background: #3c3c3c; display: flex; align-items: center; padding: 0 0 6px 13px; letter-spacing: -.25px; }
.bookmarks a { display: flex; align-items: center; gap: 6px; white-space: nowrap; }
.bookmarks a svg { width: 16px; height: 16px; }
.apps { width: 14px; height: 14px; margin-right: 15px; }
.b-gmail { margin-left: 14px; width: 77px; }
.b-yt { width: 97px; }
.b-maps { width: 75px; }
.b-drive { width: 154px; }
.vline.last { margin-left: auto; }
.bookmarks .b-all { margin-left: 16px; width: 135px; gap: 8px; }

/* canvas */
.canvas { position: relative; flex: 1; overflow: hidden; background: #444; }
.label { height: 14px; font-size: 11px; line-height: 14px; color: #a3a3a3; white-space: nowrap; }
.l-join, .l-frame, .banner, .board { position: absolute; left: 51.500px; }
.l-join { top: 0; }
.l-frame { top: 781px; }
.banner { right: 0; height: 80.500px; background: #ff7447; color: #fff; font-weight: 700; font-size: 27.600px; line-height: 80px; white-space: nowrap; overflow: hidden; }
.banner-1 { top: 19.500px; }
.banner-2 { top: 800.500px; }
.banner-1 span { margin-left: 1758.500px; }
.banner-2 span { display: block; width: 1219.500px; text-align: right; }
.board { top: 104px; width: 414.300px; }
.board .label { margin-bottom: 5px; }
.board-2 { left: 537.400px; }
.board-3 { left: 1023.300px; }
.board-4 { left: 1509.300px; }
.clip { overflow: hidden; height: 324.700px; }
.board-2 .clip { height: 345.700px; }
.board-4 .clip { height: 304px; }
.page { width: 1920px; height: 1605px; transform: scale(.2158); transform-origin: 0 0; background: #eef2f7; color: #2b2b2b; text-rendering: geometricPrecision; }
.topbar { height: 40px; padding: 0 240px; background: #fff; border-bottom: 2px solid #f1f1f1; display: flex; align-items: center; justify-content: space-between; font-size: 13.500px; white-space: nowrap; }
.lang { display: flex; align-items: center; gap: 5px; }
.head { height: 169px; background: #fff; padding: 28px 240px 0; }
.head-row { height: 90px; padding-left: 8px; display: flex; align-items: center; }
.hx { width: 26px; height: 26px; margin: -31px 18px 0 0; }
.head h2 { margin: -31px auto 0 0; font-size: 24px; font-weight: 600; }
.step { padding-bottom: 11px; display: grid; gap: 4px; }
.step b { font-size: 24px; line-height: 30px; font-weight: 600; }
.step small { font-size: 16.500px; line-height: 28px; color: #666; }
.bar { height: 11px; margin-top: 1px; border-radius: 6px; background: #f0f0f0; overflow: hidden; }
.bar i { display: block; height: 100%; background: #ff7447; border-radius: 6px; }
.card { width: 828px; margin: 80px 0 0 516px; padding: 39px 39px 37px; background: #fff; border-radius: 12px; }
.card h3 { margin: 0; font-size: 24px; line-height: 30px; font-weight: 600; }
.card h4 { margin: 0; font-size: 20px; line-height: 24px; font-weight: 600; }
.card hr { height: 2px; margin: 61px 0 0; border: 0; background: #f0f0f0; }
.after-rule { padding-top: 25px; }
.spaced { padding-top: 79px; }
.card .second { margin-top: 22px; }
.row { display: flex; gap: 30px; margin-top: 48px; }
.row.first { margin-top: 50px; }
.row.tight { margin-top: 32px; }
.field { flex: 1; }
.field label { display: block; font-size: 18px; line-height: 22px; font-weight: 600; white-space: nowrap; }
.field p { height: 50px; margin: 18px 0 0; padding: 0 20px; border: 1px solid #eef0f3; border-radius: 10px; background: #f8f9fb; display: flex; align-items: center; gap: 10px; font-size: 16px; color: #777; white-space: nowrap; }
.field .search { height: 52px; margin-top: 20px; }
.field .area { height: 120px; margin-top: 20px; align-items: flex-start; padding-top: 15px; }
.end { width: 16px; height: 16px; margin-left: auto; color: #444; }
.end.x { width: 12px; height: 12px; }
.lead { width: 18px; height: 18px; }
.chips { display: flex; gap: 20px; margin-top: 20px; }
.chips span { height: 55px; padding: 0 17px; border: 2px solid #eee; border-radius: 8px; display: flex; align-items: center; justify-content: space-between; font-size: 16px; font-weight: 500; }
.chips svg { width: 13px; height: 13px; }
.w1 { width: 170px; }
.w2 { width: 133px; }
.actions { display: flex; justify-content: space-between; margin-top: 80px; }
.btn { width: 156px; height: 50px; border: 2px solid #f3f3f3; border-radius: 7px; display: flex; align-items: center; justify-content: center; gap: 16px; font-size: 18px; font-weight: 500; }
.btn svg { width: 18px; height: 18px; }
.btn.primary { width: 162px; border: 0; gap: 20px; background: #ff7447; color: #fff; }
.flip { transform: scaleX(-1); }
.drop { height: 241px; margin-top: 79px; border: 2px dashed #e2e4e7; border-radius: 10px; background: #f8f9fb; display: flex; flex-direction: column; align-items: center; padding-top: 32px; color: #666; }
.disc { width: 50px; height: 50px; border-radius: 50%; background: #e4e6e8; display: grid; place-items: center; }
.d1 { margin-top: 9px; font-size: 15px; line-height: 24px; }
.d2 { margin-top: 7px; font-size: 14px; line-height: 22px; }
.choose { margin-top: 25px; padding: 0 9px; border-radius: 5px; background: #fff; color: #222; font-size: 14px; line-height: 34px; font-weight: 500; }
.row.files { margin-top: 24px; }
.files p { margin-top: 20px; height: 48px; }
.reqs { height: 198px; margin-top: 25px; padding: 20px 23px; border: 3px solid #9fe0d6; border-radius: 8px; background: #e6f7f5; }
.reqs b { display: block; font-size: 18px; line-height: 24px; font-weight: 600; color: #1db8a2; }
.reqs ul { margin: 9px 0 0; padding: 0; list-style: none; font-size: 14px; line-height: 24px; }
.reqs li::before { content: "• "; }
.map { width: 750px; height: 445px; margin-top: 50px; border-radius: 8px; overflow: hidden; }
.map text { font: 600 10px Inter, sans-serif; }
.places { fill: #4f5664; letter-spacing: 1px; }
.map .sm { font-size: 8px; letter-spacing: 0; }
.green { fill: #27a37c; }
.blue { fill: #2b8ef0; }
.violet { fill: #9a51ee; }

.scroll-v { position: absolute; left: 1845.500px; top: 56px; width: 5px; height: 159px; border-radius: 3px; background: rgba(60,60,60,.6); border: 1px solid rgba(200,200,200,.5); }
.scroll-h { position: absolute; left: 951.500px; top: 919px; width: 169px; height: 6px; border-radius: 3px; background: #2c2c2c; border: 1px solid #8b8b8b; }

/* floating panels */
.panel { position: absolute; height: 47px; border-radius: 13px; background: #2c2c2c; box-shadow: 0 1px 3px rgba(0,0,0,.5); display: flex; align-items: center; color: #fff; }
.chev { width: 8px; height: 8px; }
.file-panel { left: 13px; top: 14px; width: 457.500px; padding: 0 15px 0 18px; }
.flogo { width: 12px; height: 17px; }
.c1 { margin-left: 5px; }
.file-panel strong { margin-left: 21px; font-size: 13px; font-weight: 600; letter-spacing: -.09px; white-space: nowrap; }
.side { width: 16px; height: 13px; margin-left: auto; }
.share-panel { left: 1551.500px; top: 14px; width: 290.500px; padding-left: 18.500px; font-size: 11px; font-weight: 500; }
.user { width: 24px; height: 24px; }
.second-user { margin-left: -1px; }
.share-panel > .chev { margin-left: 4px; }
.zoom { width: 66px; height: 26px; margin-left: 11px; padding: 0 4px 0 15px; border: 1px solid #444; border-radius: 5px; display: flex; align-items: center; justify-content: space-between; }
.play { width: 13px; height: 16px; margin-left: 16px; }
.share-panel .play + .chev { margin-left: 12px; }
.share { width: 55px; height: 32px; margin-left: 16px; border: 1px solid #444; border-radius: 5px; display: grid; place-items: center; }
.signup { position: absolute; left: 685.300px; top: 822.300px; width: 484.500px; height: 70px; padding: 11.700px 11.500px 0 11.200px; border-radius: 13px 13px 0 0; background: #0c8ce9; box-shadow: 0 0 3px rgba(0,0,0,.4); color: #fff; display: flex; align-items: flex-start; font-size: 11.300px; }
.signup strong { margin-right: auto; font-size: 11px; line-height: 24px; font-weight: 600; letter-spacing: .03px; }
.outline, .google { height: 24px; border-radius: 5px; display: flex; align-items: center; justify-content: center; font-weight: 400; }
.outline { width: 58px; border: 1px solid #fff; }
.google { width: 82px; margin-left: 8px; background: #fff; color: #1e1e1e; gap: 4px; }
.google svg { width: 14px; height: 14px; }
.tools { left: 685.300px; top: 868.500px; width: 484.500px; padding-left: 8px; }
.tool { width: 32px; height: 32px; margin-right: 8px; border-radius: 5px; display: grid; place-items: center; flex: none; }
.tool svg { width: 18px; height: 18px; fill: none; stroke: #fff; stroke-width: 1.050; stroke-linejoin: round; stroke-linecap: round; }
.tool.on { background: #0c8ce9; }
.split { width: 1px; height: 100%; background: #444; margin-right: 8px; flex: none; }
.tools .tool:has(+ .chev) { margin-right: 4px; }
.tools > .chev { margin-right: 13px; }
.dev { width: 40px; height: 24px; border-radius: 5px; background: #383838; flex: none; }
.dev span { width: 23px; height: 24px; border-radius: 5px; border: 1px solid #444; background: #2c2c2c; display: grid; place-items: center; }
.dev svg { width: 17px; height: 14px; fill: none; stroke: #ddd; }
.help { position: absolute; left: 1798px; top: 872px; width: 32px; height: 32px; border-radius: 50%; background: #1e1e1e; color: #fff; font-size: 19px; font-weight: 300; line-height: 32px; text-align: center; }
```
